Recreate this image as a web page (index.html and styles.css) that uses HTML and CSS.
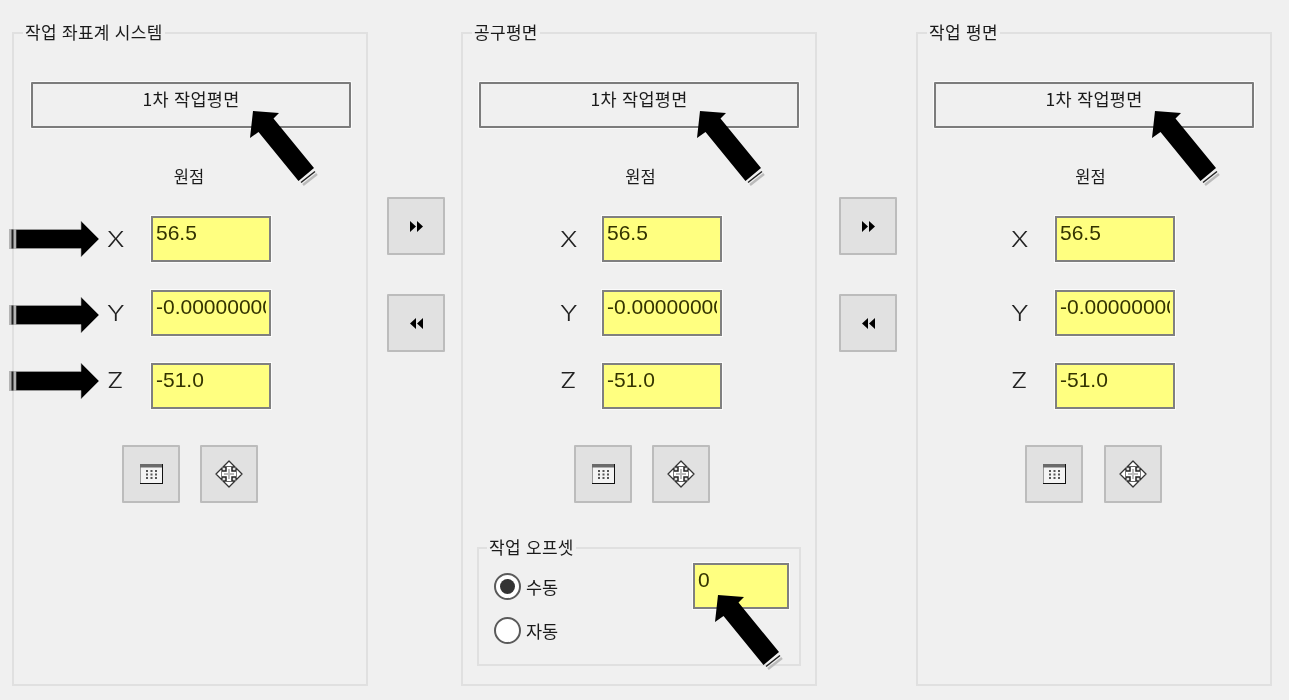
FILE: index.html
```html
<!DOCTYPE html>
<html lang="ko">
<head>
<meta charset="utf-8">
<title>작업 좌표계</title>
<link rel="stylesheet" href="styles.css">
</head>
<body>
<svg width="0" height="0" class="defs">
  <defs>
    <g id="ico-table">
      <rect x="0.5" y="0.5" width="22" height="19" fill="#f4f4f4" stroke="#9a9a9a"/>
      <rect x="0" y="0" width="23" height="3.500" fill="#6a6a6a"/>
      <path d="M0 19.500H23M22.500 0V20" stroke="#111" fill="none"/>
      <path d="M6 7h2M10.500 7h2M15 7h2M6 10.500h2M10.500 10.500h2M15 10.500h2M6 14h2M10.500 14h2M15 14h2" stroke="#555" stroke-width="2" fill="none"/>
    </g>
    <g id="ico-move">
      <path d="M14 1l6 6H8zM14 27l6-6H8zM1 14l6-6v12zM27 14l-6-6v12z" fill="#fff" stroke="#333" stroke-width="1.300" stroke-linejoin="round"/>
      <path d="M14 7v14M7 14h14" stroke="#fff" stroke-width="6"/>
      <path d="M11 7v4H7M17 7v4h4M11 21v-4H7M17 21v-4h4" stroke="#222" stroke-width="1.500" fill="none"/>
      <path d="M14 9v10M9 14h10" stroke="#bbb" stroke-width="2"/>
    </g>
    <g id="arrow-diag">
      <path d="M302 185l14-11" stroke="#bbb" stroke-width="2.500" fill="none"/>
      <path d="M300 182.500l14-11" stroke="#222" stroke-width="1.500" fill="none"/>
      <path d="M252 111L278 113 272.500 118.500 313 168 297.500 181 257.500 132 249 138z" fill="#000"/>
    </g>
    <g id="arrow-right">
      <rect x="9" y="-10" width="7" height="20" fill="#b5b5b5"/>
      <rect x="11.500" y="-9.500" width="2" height="19" fill="#222"/>
      <path d="M16-9.500H81V-18l18 18-18 18V9.500H16z" fill="#000" stroke="#aaa" stroke-width=".6"/>
    </g>
  </defs>
</svg>

<main class="dialog">
  <fieldset class="panel panel-a">
    <legend class="panel-legend">작업 좌표계 시스템</legend>
    <div class="plane-box">1차 작업평면</div>
    <div class="origin">원점</div>
    <div class="coords">
      <div class="row"><span class="axis">X</span><div class="field">56.5</div></div>
      <div class="row"><span class="axis">Y</span><div class="field">-0.0000000000</div></div>
      <div class="row"><span class="axis axis-z">Z</span><div class="field">-51.0</div></div>
    </div>
    <div class="tools">
      <button class="btn" type="button"><svg class="ico" width="23" height="20"><use href="#ico-table"/></svg></button>
      <button class="btn" type="button"><svg class="ico" width="28" height="28"><use href="#ico-move"/></svg></button>
    </div>
  </fieldset>

  <div class="mid mid-a">
    <button class="btn" type="button"><svg class="ico" width="13" height="11" viewBox="0 0 13 11"><path d="M0 0l6 5.500L0 11zM7 0l6 5.500L7 11z" fill="#000"/></svg></button>
    <button class="btn" type="button"><svg class="ico" width="13" height="11" viewBox="0 0 13 11"><path d="M6 0L0 5.500 6 11zM13 0L7 5.500l6 5.500z" fill="#000"/></svg></button>
  </div>

  <fieldset class="panel panel-b">
    <legend class="panel-legend">공구평면</legend>
    <div class="plane-box">1차 작업평면</div>
    <div class="origin">원점</div>
    <div class="coords">
      <div class="row"><span class="axis">X</span><div class="field">56.5</div></div>
      <div class="row"><span class="axis">Y</span><div class="field">-0.0000000000</div></div>
      <div class="row"><span class="axis axis-z">Z</span><div class="field">-51.0</div></div>
    </div>
    <div class="tools">
      <button class="btn" type="button"><svg class="ico" width="23" height="20"><use href="#ico-table"/></svg></button>
      <button class="btn" type="button"><svg class="ico" width="28" height="28"><use href="#ico-move"/></svg></button>
    </div>
    <fieldset class="offset">
      <legend class="panel-legend">작업 오프셋</legend>
      <div class="radios">
        <div class="radio-row"><span class="radio radio-on"></span><span class="radio-label">수동</span></div>
        <div class="radio-row"><span class="radio"></span><span class="radio-label">자동</span></div>
      </div>
      <div class="field field-offset">0</div>
    </fieldset>
  </fieldset>

  <div class="mid mid-b">
    <button class="btn" type="button"><svg class="ico" width="13" height="11" viewBox="0 0 13 11"><path d="M0 0l6 5.500L0 11zM7 0l6 5.500L7 11z" fill="#000"/></svg></button>
    <button class="btn" type="button"><svg class="ico" width="13" height="11" viewBox="0 0 13 11"><path d="M6 0L0 5.500 6 11zM13 0L7 5.500l6 5.500z" fill="#000"/></svg></button>
  </div>

  <fieldset class="panel panel-c">
    <legend class="panel-legend">작업 평면</legend>
    <div class="plane-box">1차 작업평면</div>
    <div class="origin">원점</div>
    <div class="coords">
      <div class="row"><span class="axis">X</span><div class="field">56.5</div></div>
      <div class="row"><span class="axis">Y</span><div class="field">-0.0000000000</div></div>
      <div class="row"><span class="axis axis-z">Z</span><div class="field">-51.0</div></div>
    </div>
    <div class="tools">
      <button class="btn" type="button"><svg class="ico" width="23" height="20"><use href="#ico-table"/></svg></button>
      <button class="btn" type="button"><svg class="ico" width="28" height="28"><use href="#ico-move"/></svg></button>
    </div>
  </fieldset>
</main>

<svg class="callouts" width="1289" height="700" viewBox="0 0 1289 700" aria-hidden="true">
  <use href="#arrow-diag" x="1"/>
  <use href="#arrow-diag" x="448"/>
  <use href="#arrow-diag" x="903"/>
  <use href="#arrow-diag" x="466" y="484"/>
  <use href="#arrow-right" y="239"/>
  <use href="#arrow-right" y="315"/>
  <use href="#arrow-right" y="381"/>
</svg>
</body>
</html>
```
FILE: styles.css
```css
* { box-sizing: border-box; }

html, body {
  margin: 0;
  height: 700px;
  overflow: hidden;
  background: #f0f0f0;
}

body {
  position: relative;
  color: #1a1a1a;
  font-family: "Noto Sans CJK KR", "Liberation Sans", sans-serif;
  font-size: 17px;
}

.defs { position: absolute; }

.dialog {
  display: flex;
  align-items: flex-start;
  padding: 21px 0 0 12px;
  filter: blur(0.35px);
}

.panel {
  --box-left: 17px;
  --axis-left: 93px;
  --axis-width: 44px;
  --tools-left: 108px;
  --tools-gap: 20px;
  --origin-shift: -1px;
  margin: 0;
  padding: 0;
  width: 356px;
  height: 665px;
  min-width: 0;
  border: 2px solid #e0e0e0;
}

.panel-b {
  --box-left: 16px;
  --axis-left: 97px;
  --axis-width: 42px;
  --tools-left: 111px;
  --origin-shift: 1.500px;
  width: 356px;
}

.panel-c {
  --box-left: 16px;
  --tools-left: 107px;
  --tools-gap: 21px;
  --origin-shift: -3.500px;
  width: 356px;
}

.panel-legend {
  margin-left: 9px;
  padding: 0 2px;
  height: 24px;
  line-height: 22px;
  font-size: 17px;
  white-space: nowrap;
  letter-spacing: 0.3px;
}

.plane-box {
  margin: 37px 0 0 var(--box-left);
  width: 320px;
  height: 46px;
  padding-top: 3px;
  border: 2px solid #7c7c7c;
  border-radius: 1px;
  box-shadow: 0 0 0 1px #fbfbfb;
  text-align: center;
  line-height: 24px;
  font-size: 17.500px;
  letter-spacing: 0.3px;
}

.origin {
  margin-top: 36px;
  height: 24px;
  line-height: 24px;
  text-align: center;
  font-size: 16.500px;
  transform: translateX(var(--origin-shift));
}

.coords {
  display: flex;
  flex-direction: column;
  gap: 27.500px;
  margin-top: 28px;
}

.row {
  display: flex;
  align-items: center;
  height: 46px;
  padding-left: var(--axis-left);
}

.axis {
  width: var(--axis-width);
  font-family: Inter, "Liberation Sans", sans-serif;
  font-weight: 300;
  font-size: 22px;
  color: #222;
  transform: scaleX(1.2);
  transform-origin: left center;
}

.axis-z { margin-bottom: 12px; }

.field {
  width: 120px;
  height: 46px;
  padding: 2px 3px 0 3px;
  overflow: clip;
  overflow-clip-margin: content-box;
  white-space: nowrap;
  background: #ffff80;
  border: 2px solid #808080;
  box-shadow: 0 0 0 1px #fbfbfb;
  font-family: "Liberation Sans", sans-serif;
  font-size: 21px;
  line-height: 26px;
  color: #333300;
}

.tools {
  display: flex;
  gap: var(--tools-gap);
  margin: 36px 0 0 var(--tools-left);
}

.btn {
  display: flex;
  align-items: center;
  justify-content: center;
  width: 58px;
  height: 58px;
  padding: 0;
  background: #e1e1e1;
  border: 2px solid #bcbcbc;
  border-radius: 1px;
}

.mid {
  display: flex;
  flex-direction: column;
  gap: 39px;
  padding-top: 176px;
}

.mid-a { margin: 0 16px 0 19px; }
.mid-b { margin: 0 19px 0 22px; }

.offset {
  display: flex;
  justify-content: space-between;
  margin: 33px 0 0 14px;
  padding: 3px 10px 0 15px;
  width: 324px;
  height: 130px;
  min-width: 0;
  border: 2px solid #e0e0e0;
}

.offset .panel-legend { margin-left: -7px; }

.radios {
  display: flex;
  flex-direction: column;
  gap: 17px;
  margin-top: 10px;
}

.radio-row {
  display: flex;
  align-items: center;
  gap: 5px;
  height: 27px;
}

.radio-label {
  font-size: 17.500px;
  line-height: 24px;
}

.radio {
  display: flex;
  align-items: center;
  justify-content: center;
  width: 27px;
  height: 27px;
  border: 2px solid #5a5a5a;
  border-radius: 50%;
  background: #fff;
}

.radio-on::after {
  content: "";
  width: 15px;
  height: 15px;
  border-radius: 50%;
  background: #333;
}

.field-offset {
  width: 96px;
  flex: none;
}

.callouts {
  position: absolute;
  top: 0;
  left: 0;
  pointer-events: none;
  filter: blur(0.3px);
}
```
